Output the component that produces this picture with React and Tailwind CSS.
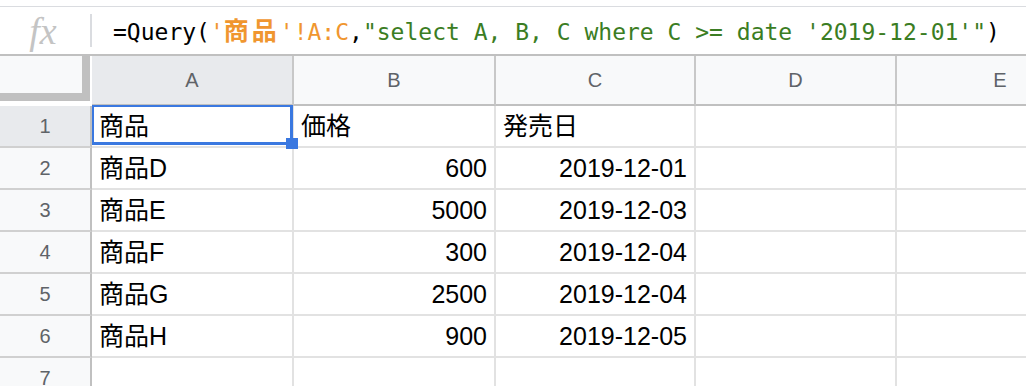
import React from "react";

const COLS = [
  { label: "A", w: "w-[202px]", sel: true },
  { label: "B", w: "w-[202px]" },
  { label: "C", w: "w-[200px]" },
  { label: "D", w: "w-[201px]" },
];

const DATA = [
  ["商品", "価格", "発売日"],
  ["商品D", "600", "2019-12-01"],
  ["商品E", "5000", "2019-12-03"],
  ["商品F", "300", "2019-12-04"],
  ["商品G", "2500", "2019-12-04"],
  ["商品H", "900", "2019-12-05"],
  ["", "", ""],
];

const cellFont = {
  fontFamily: '"Liberation Sans", Arial, "Noto Sans CJK JP", sans-serif',
};

function FormulaBar() {
  return (
    <div className="pt-[6px] bg-white">
      <div className="h-[50px] flex items-center border-t border-[#dadce0] border-b-2 border-b-[#c0c0c0] bg-white">
        <div className="w-[90px] flex justify-center items-center">
          <span
            className="text-[38px] italic text-[#c4c4c4] leading-none pr-[4px]"
            style={{ fontFamily: '"Liberation Serif", "DejaVu Serif", serif' }}
          >
            fx
          </span>
        </div>
        <div className="w-[2px] h-[33px] bg-[#dadce0]" />
        <div
          className="ml-[21px] text-[23px] leading-none whitespace-nowrap text-black"
          style={{ fontFamily: '"DejaVu Sans Mono", "Noto Sans CJK JP", monospace' }}
        >
          <span>=Query(</span>
          <span className="text-[#f0962f]">
            '
            <span
              className="text-[25px] tracking-[3px] font-bold"
              style={{ fontFamily: '"Noto Sans CJK JP", sans-serif' }}
            >
              商品
            </span>
            '!A:C
          </span>
          <span>,</span>
          <span className="text-[#3b7d23]">"select A, B, C where C &gt;= date '2019-12-01'"</span>
          <span>)</span>
        </div>
      </div>
    </div>
  );
}

function HeaderRow() {
  return (
    <div className="flex h-[50px]">
      <div className="w-[92px] shrink-0 h-full bg-white flex flex-col">
        <div className="w-[90px] h-[45px] bg-[#c0c0c0] pr-[8px] pb-[8px]">
          <div className="w-full h-full bg-[#f8f9fa]" />
        </div>
      </div>
      {COLS.map((c) => (
        <div
          key={c.label}
          className={`${c.w} shrink-0 h-full flex items-center justify-center border-r-2 border-r-[#c8c8c8] border-b-2 border-b-[#c0c0c0] ${
            c.sel ? "bg-[#e8eaed]" : "bg-[#f8f9fa]"
          } text-[20px] text-[#5f6368]`}
          style={cellFont}
        >
          {c.label}
        </div>
      ))}
      <div
        className="w-[206px] shrink-0 h-full flex items-center justify-center border-b-2 border-b-[#c0c0c0] bg-[#f8f9fa] text-[20px] text-[#5f6368]"
        style={cellFont}
      >
        E
      </div>
    </div>
  );
}

function DataRow({ idx, row }) {
  const isHeader = idx === 0;
  return (
    <div className="flex h-[42px] shrink-0">
      <div
        className={`w-[92px] shrink-0 h-full flex items-center justify-center border-r-2 border-r-[#c0c0c0] border-b-2 border-b-[#d0d0d0] ${
          idx === 0 ? "bg-[#e8eaed]" : "bg-[#f8f9fa]"
        } text-[20px] text-[#5f6368]`}
        style={cellFont}
      >
        {idx + 1}
      </div>
      {COLS.map((c, ci) => {
        const val = ci < 3 ? row[ci] : "";
        const right = !isHeader && (ci === 1 || ci === 2);
        const selected = idx === 0 && ci === 0;
        return (
          <div
            key={c.label}
            className={`${c.w} shrink-0 h-full ${selected ? "relative z-10" : ""} flex items-center border-r-2 border-r-[#e2e2e2] border-b-2 border-b-[#e2e2e2] bg-white px-[7px] text-[25px] text-black leading-none whitespace-nowrap ${
              right ? "justify-end" : "justify-start"
            }`}
            style={cellFont}
          >
            {val}
            {selected && (
              <>
                <div className="absolute left-0 top-[-1px] w-[201px] h-[40px] border-t-2 border-l-2 border-r-[3px] border-b-[3px] border-[#3a78e0] pointer-events-none" />
                <div className="absolute left-[194px] top-[32px] w-[12px] h-[11px] bg-[#3a78e0] pointer-events-none" />
              </>
            )}
          </div>
        );
      })}
      <div className="w-[206px] shrink-0 h-full border-b-2 border-b-[#e2e2e2] bg-white" />
    </div>
  );
}

export default function App() {
  return (
    <div className="w-[1026px] h-[386px] overflow-hidden bg-white">
      <FormulaBar />
      <HeaderRow />
      {DATA.map((row, i) => (
        <DataRow key={i} idx={i} row={row} />
      ))}
    </div>
  );
}
